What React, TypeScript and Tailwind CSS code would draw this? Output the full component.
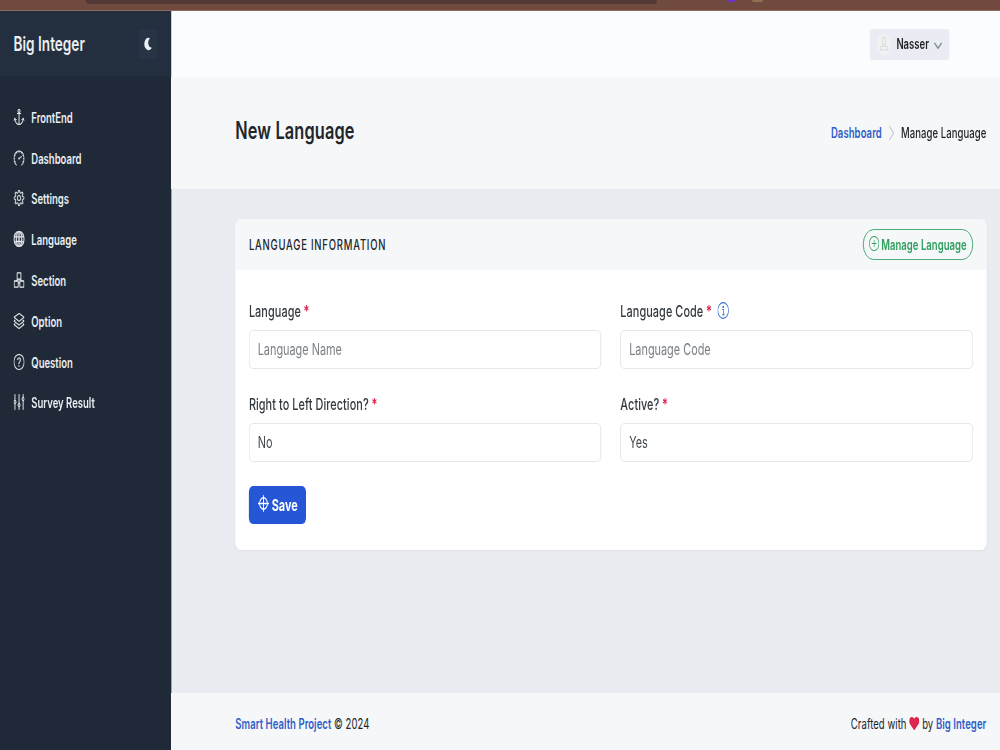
import React from 'react';
import {
  SlAnchor,
  SlSpeedometer,
  SlSettings,
  SlGlobe,
  SlLayers,
  SlQuestion,
  SlEqualizer,
  SlPlus,
} from 'react-icons/sl';
import { FaHeart } from 'react-icons/fa';

// Three stacked boxes, in the same line weight as the other nav icons
function BlocksIcon({ className }: { className?: string }) {
  return (
    <svg viewBox="0 0 16 16" fill="none" stroke="currentColor" strokeWidth="1.3" className={className}>
      <rect x="5.2" y="0.8" width="5.6" height="6.4" rx="0.6" />
      <rect x="0.8" y="9" width="6" height="6.2" rx="0.6" />
      <rect x="9.2" y="9" width="6" height="6.2" rx="0.6" />
      <path d="M8 7.2v2.2M4 9l2-1.8M12 9l-2-1.8M6.8 11h2.4" />
    </svg>
  );
}

function MoonIcon({ className }: { className?: string }) {
  return (
    <svg viewBox="0 0 16 16" fill="currentColor" className={className}>
      <path d="M10.2 1.2a7 7 0 1 0 3.4 11.6c.3-.4 0-.8-.5-.7A5.6 5.6 0 0 1 10.3 2c.4-.3.3-.7-.1-.8z" />
    </svg>
  );
}

function TargetIcon({ className }: { className?: string }) {
  return (
    <svg viewBox="0 0 16 16" fill="none" stroke="currentColor" strokeWidth="1.3" className={className}>
      <circle cx="8" cy="8" r="5.4" />
      <path d="M8 0.2v15.6M0.2 8h15.6" />
    </svg>
  );
}

function InfoIcon({ className }: { className?: string }) {
  return (
    <svg viewBox="0 0 16 16" fill="none" stroke="currentColor" strokeWidth="1" className={className}>
      <circle cx="8" cy="8" r="7.4" />
      <circle cx="8" cy="4.6" r="0.6" />
      <path d="M6.6 7h1.9v4.9M6.4 12h3.6" />
    </svg>
  );
}

const navItems = [
  { label: 'FrontEnd', icon: SlAnchor },
  { label: 'Dashboard', icon: SlSpeedometer },
  { label: 'Settings', icon: SlSettings },
  { label: 'Language', icon: SlGlobe },
  { label: 'Section', icon: BlocksIcon },
  { label: 'Option', icon: SlLayers },
  { label: 'Question', icon: SlQuestion },
  { label: 'Survey Result', icon: SlEqualizer },
];

function Sidebar() {
  return (
    <aside className="w-[252px] shrink-0 bg-[#1f2937] text-[#ebeef2]">
      <div className="flex h-[65px] items-center justify-between bg-[#232f3f] px-5">
        <span className="text-xl font-semibold">Big Integer</span>
        <button className="flex h-[30px] w-[29px] items-center justify-center rounded bg-[#273446]">
          <MoonIcon className="size-3.5" />
        </button>
      </div>
      <nav className="pt-[21.5px]">
        {navItems.map(({ label, icon: Icon }) => (
          <a key={label} className="flex h-[40.8px] items-center px-5 text-sm font-semibold">
            <Icon
              className={
                label === 'Language'
                  ? 'mr-2.5 mb-0.5 size-4 stroke-current stroke-[40]'
                  : label === 'Section'
                    ? 'mr-2.5 mb-0.5 size-4'
                    : 'mr-2.5 mb-0.5 size-4 stroke-current stroke-[16]'
              }
            />
            {label}
          </a>
        ))}
      </nav>
    </aside>
  );
}

interface FieldProps {
  label: string;
  placeholder?: string;
  value?: string;
  info?: boolean;
}

function Field({ label, placeholder, value, info }: FieldProps) {
  return (
    <div>
      <label className="flex h-6 items-center text-base font-medium tracking-[0.1px] text-[#343a40]">
        {label}
        <span className="ml-1 font-semibold text-[#dc2650]">*</span>
        {info && <InfoIcon className="mb-0.5 ml-2 size-[17px] text-[#3b6fd0]" />}
      </label>
      <div className="mt-[7px] flex h-[38.5px] items-center rounded-md border border-[#dfe3ea] bg-white px-3 pb-px text-base">
        {value ? <span className="text-[#43494f]">{value}</span> : <span className="text-[#7a7f85]">{placeholder}</span>}
      </div>
    </div>
  );
}

export default function App() {
  return (
    <div className="h-[750px] w-[1000px] overflow-hidden">
      <div className="flex h-[750px] w-[1470.6px] origin-top-left scale-x-[0.68] flex-col bg-[#e9edf2] font-['Inter',sans-serif] text-[#212529]">
        {/* Browser chrome edge */}
        <div className="flex h-[11px] shrink-0 items-start border-b border-[#8b6a61] bg-[#704a3f] pl-[126px]">
          <div className="h-1 w-[840px] rounded-b-lg bg-[#543a36]" />
          <div className="ml-[104px] h-0.5 w-3 rounded-b-full bg-[#6d35c4]" />
          <div className="ml-6 h-0.5 w-4 rounded-b-full bg-[#91704f]" />
        </div>

        <div className="flex min-h-0 flex-1">
          <Sidebar />
          <div className="flex min-w-0 flex-1 flex-col">
            <header className="flex h-[66px] shrink-0 items-center justify-end bg-[#fbfcfe] pr-[74.5px] shadow-[0_1px_2px_rgba(0,0,0,0.05)]">
              <button className="flex h-[31px] items-center rounded bg-[#e9ecf2] px-2.5 text-sm font-semibold">
                <span className="mr-2 flex size-[21px] items-center justify-center rounded-full bg-[#f0f1f2]">
                  <svg viewBox="0 0 16 16" fill="none" stroke="#d9d9d9" strokeWidth="1.2" className="size-4">
                    <rect x="5.5" y="1.5" width="5" height="7" rx="2.5" />
                    <path d="M6.5 8.5v2M9.5 8.5v2M2.5 14v-1.5q0-2 2-2h7q2 0 2 2V14z" />
                  </svg>
                </span>
                Nasser
                <svg viewBox="0 0 12 12" fill="none" stroke="#8a8f96" strokeWidth="1.6" className="mt-0.5 ml-[7px] size-[13px]">
                  <path d="M1 3.5l5 5 5-5" />
                </svg>
              </button>
            </header>

            <div className="flex h-[112px] shrink-0 items-center justify-between bg-[#f5f7f9] pr-5 pl-[94px]">
              <h1 className="pb-1 text-2xl font-semibold tracking-[0.2px]">New Language</h1>
              <div className="flex items-center text-sm font-medium tracking-[0.12px]">
                <a className="font-semibold text-[#2f5ec9]">Dashboard</a>
                <svg viewBox="0 0 8 16" fill="none" stroke="#c5cad1" strokeWidth="1.4" className="mx-2.5 h-4 w-2">
                  <path d="M1 1l6 7-6 7" />
                </svg>
                <span>Manage Language</span>
              </div>
            </div>

            <main className="flex-1 pt-[30px] pr-5 pl-[94px]">
              <section className="h-[331px] overflow-hidden rounded-lg bg-white shadow-[0_1px_3px_rgba(0,0,0,0.06)]">
                <div className="flex h-[51px] items-center justify-between bg-[#f5f7f9] px-5">
                  <h3 className="text-sm font-medium tracking-[1.14px]">LANGUAGE INFORMATION</h3>
                  <button className="flex h-[31px] items-center gap-[3px] rounded-full border border-[#2f9e5f] px-2 text-sm font-semibold tracking-[0.05px] text-[#2f9e5f]">
                    <SlPlus className="mb-0.5 size-[15px]" />
                    Manage Language
                  </button>
                </div>
                <div className="px-5 pt-[29px]">
                  <div className="grid grid-cols-2 gap-x-7 gap-y-[23.5px]">
                    <Field label="Language" placeholder="Language Name" />
                    <Field label="Language Code" placeholder="Language Code" info />
                    <Field label="Right to Left Direction?" value="No" />
                    <Field label="Active?" value="Yes" />
                  </div>
                  <button className="mt-6 flex h-[38.5px] items-center gap-1 rounded-md bg-[#2456d6] px-[12.5px] text-base font-bold text-white">
                    <TargetIcon className="mb-0.5 size-[17px]" />
                    Save
                  </button>
                </div>
              </section>
            </main>

            <footer className="flex h-[57px] shrink-0 items-center justify-between bg-[#f5f7f9] pt-1 pr-5 pl-[94px] text-sm tracking-[0.08px]">
              <div>
                <a className="font-semibold text-[#2f5ec9]">Smart Health Project</a> © 2024
              </div>
              <div className="flex items-center gap-1">
                Crafted with <FaHeart className="size-[15px] text-[#dc2650]" /> by
                <a className="font-semibold text-[#2f5ec9]">Big Integer</a>
              </div>
            </footer>
          </div>
        </div>
      </div>
    </div>
  );
}
